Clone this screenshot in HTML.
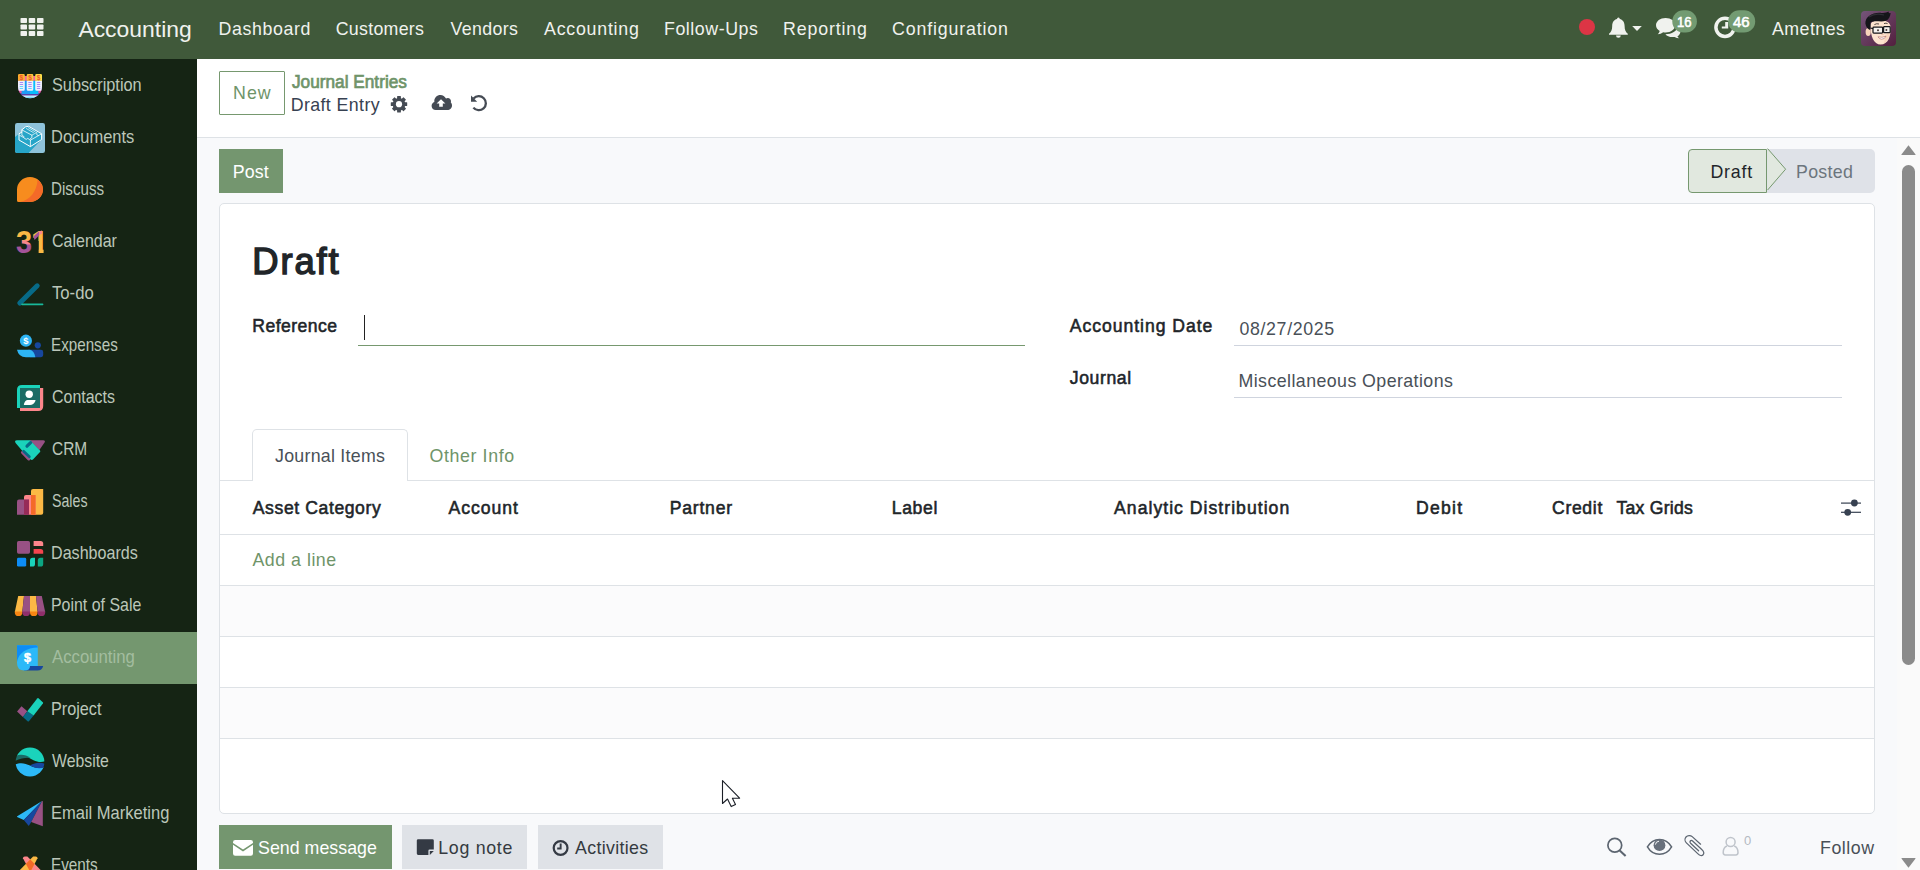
<!DOCTYPE html>
<html lang="en">
<head>
<meta charset="utf-8">
<title>Odoo - Draft Entry</title>
<style>
*{box-sizing:border-box;margin:0;padding:0}
html,body{width:1920px;height:870px;overflow:hidden;background:#f8f9fb;font-family:"Liberation Sans",sans-serif;font-size:18px;color:#374151}
.abs{position:absolute}
.t{position:absolute;white-space:nowrap;display:block}
svg{position:absolute;overflow:visible}
#nav{position:absolute;left:0;top:0;width:1920px;height:59px;background:#40593a}
#side{position:absolute;left:0;top:59px;width:197px;height:811px;background:#152414}
#side .active{position:absolute;left:0;top:573px;width:197px;height:52px;background:#74976f}
#cp{position:absolute;left:197px;top:59px;width:1723px;height:79px;background:#fff;border-bottom:1px solid #dee2e6}
#main{position:absolute;left:197px;top:138px;width:1700px;height:732px;background:#f8f9fb}
#sheet{position:absolute;left:219px;top:203px;width:1656px;height:611px;background:#fff;border:1px solid #dee2e6;border-radius:5px}
.btn-new{position:absolute;left:219px;top:71px;width:66px;height:44px;border:1px solid #76986f;background:#fff;border-radius:1px}
.btn-post{position:absolute;left:219px;top:149px;width:64px;height:44px;background:#74966f}
.hl{position:absolute;height:1px;background:#dee2e6}
.badge{position:absolute;height:22px;border-radius:11px;background:#6f9469;color:#fff}
</style>
</head>
<body>
<!-- ================= MAIN AREA ================= -->
<main id="main"></main>
<header id="cp">
</header>
<div class="btn-new"></div>
<div class="btn-post"></div>
<!-- statusbar -->
<div class="abs" style="left:1767px;top:149px;width:108px;height:44px;background:#dfe2e8;border-radius:0 5px 5px 0"></div>
<svg style="left:1766px;top:148px" width="24" height="46" viewBox="0 0 24 46"><path d="M1.6 .6 L19.6 21.2 L1.6 42 Z" fill="#e1e8df"/><path d="M1.6 .6 L19.6 21.2 L1.6 42" fill="none" stroke="#76986f" stroke-width="1"/></svg>
<div class="abs" style="left:1688px;top:149px;width:79px;height:44px;background:#e1e8df;border:1px solid #76986f;border-radius:4px 0 0 4px"></div>

<span class="t" style="left:233.00px;top:81.63px;font-size:17.8px;line-height:23px;font-weight:400;color:#6f9469;letter-spacing:1.035px;">New</span>
<span class="t" style="left:291.60px;top:70.70px;font-size:17.6px;line-height:23px;font-weight:400;color:#6f9469;transform:scaleX(0.9791);transform-origin:0 0;-webkit-text-stroke:0.7px #6f9469;">Journal Entries</span>
<span class="t" style="left:290.70px;top:93.63px;font-size:17.8px;line-height:23px;font-weight:400;color:#374151;letter-spacing:0.392px;">Draft Entry</span>
<span class="t" style="left:232.80px;top:160.63px;font-size:17.8px;line-height:23px;font-weight:400;color:#ffffff;letter-spacing:0.087px;">Post</span>
<span class="t" style="left:1710.40px;top:160.63px;font-size:17.8px;line-height:23px;font-weight:400;color:#212529;letter-spacing:0.827px;">Draft</span>
<span class="t" style="left:1796.00px;top:160.63px;font-size:17.8px;line-height:23px;font-weight:400;color:#6c757d;letter-spacing:0.306px;">Posted</span>

<!-- sheet -->
<section id="sheet"></section>
<!-- zebra rows -->
<div class="abs" style="left:220px;top:586px;width:1654px;height:50px;background:#fbfbfc"></div>
<div class="abs" style="left:220px;top:688px;width:1654px;height:50px;background:#fbfbfc"></div>
<div class="hl" style="left:220px;top:534px;width:1654px"></div>
<div class="hl" style="left:220px;top:585px;width:1654px"></div>
<div class="hl" style="left:220px;top:636px;width:1654px"></div>
<div class="hl" style="left:220px;top:687px;width:1654px"></div>
<div class="hl" style="left:220px;top:738px;width:1654px"></div>
<!-- tabs -->
<div class="hl" style="left:220px;top:480px;width:1654px"></div>
<div class="abs" style="left:252px;top:429px;width:156px;height:52px;background:#fff;border:1px solid #dee2e6;border-bottom:none;border-radius:5px 5px 0 0"></div>
<!-- field underlines -->
<div class="hl" style="left:358px;top:345px;width:667px;background:#76986f"></div>
<div class="abs" style="left:364px;top:315px;width:1px;height:25px;background:#222"></div>
<div class="hl" style="left:1234px;top:345px;width:608px;background:#cfd4de"></div>
<div class="hl" style="left:1234px;top:397px;width:608px;background:#cfd4de"></div>
<span class="t" style="left:252.20px;top:238.19px;font-size:36.4px;line-height:47px;font-weight:400;color:#212529;letter-spacing:1.913px;-webkit-text-stroke:1.4px #212529;">Draft</span>
<span class="t" style="left:252.30px;top:314.70px;font-size:17.6px;line-height:23px;font-weight:400;color:#212529;letter-spacing:0.439px;-webkit-text-stroke:0.55px #212529;">Reference</span>
<span class="t" style="left:1069.80px;top:314.70px;font-size:17.6px;line-height:23px;font-weight:400;color:#212529;letter-spacing:0.956px;-webkit-text-stroke:0.55px #212529;">Accounting Date</span>
<span class="t" style="left:1239.50px;top:317.63px;font-size:17.8px;line-height:23px;font-weight:400;color:#495057;letter-spacing:0.627px;">08/27/2025</span>
<span class="t" style="left:1069.80px;top:366.70px;font-size:17.6px;line-height:23px;font-weight:400;color:#212529;letter-spacing:0.601px;-webkit-text-stroke:0.55px #212529;">Journal</span>
<span class="t" style="left:1238.50px;top:369.63px;font-size:17.8px;line-height:23px;font-weight:400;color:#495057;letter-spacing:0.426px;">Miscellaneous Operations</span>
<span class="t" style="left:275.00px;top:444.63px;font-size:17.8px;line-height:23px;font-weight:400;color:#495057;letter-spacing:0.263px;">Journal Items</span>
<span class="t" style="left:429.50px;top:444.63px;font-size:17.8px;line-height:23px;font-weight:400;color:#6f9469;letter-spacing:0.619px;">Other Info</span>
<span class="t" style="left:252.80px;top:496.70px;font-size:17.6px;line-height:23px;font-weight:400;color:#212529;letter-spacing:0.590px;-webkit-text-stroke:0.55px #212529;">Asset Category</span>
<span class="t" style="left:448.55px;top:496.70px;font-size:17.6px;line-height:23px;font-weight:400;color:#212529;letter-spacing:0.953px;-webkit-text-stroke:0.55px #212529;">Account</span>
<span class="t" style="left:669.80px;top:496.70px;font-size:17.6px;line-height:23px;font-weight:400;color:#212529;letter-spacing:0.761px;-webkit-text-stroke:0.55px #212529;">Partner</span>
<span class="t" style="left:891.80px;top:496.70px;font-size:17.6px;line-height:23px;font-weight:400;color:#212529;letter-spacing:0.628px;-webkit-text-stroke:0.55px #212529;">Label</span>
<span class="t" style="left:1114.05px;top:496.70px;font-size:17.6px;line-height:23px;font-weight:400;color:#212529;letter-spacing:1.034px;-webkit-text-stroke:0.55px #212529;">Analytic Distribution</span>
<span class="t" style="left:1416.05px;top:496.70px;font-size:17.6px;line-height:23px;font-weight:400;color:#212529;letter-spacing:1.241px;-webkit-text-stroke:0.55px #212529;">Debit</span>
<span class="t" style="left:1552.00px;top:496.70px;font-size:17.6px;line-height:23px;font-weight:400;color:#212529;letter-spacing:0.671px;-webkit-text-stroke:0.55px #212529;">Credit</span>
<span class="t" style="left:1616.55px;top:496.70px;font-size:17.6px;line-height:23px;font-weight:400;color:#212529;letter-spacing:0.243px;-webkit-text-stroke:0.55px #212529;">Tax Grids</span>
<span class="t" style="left:252.50px;top:548.63px;font-size:17.8px;line-height:23px;font-weight:400;color:#6f9469;letter-spacing:0.506px;">Add a line</span>
<!-- column settings icon -->
<svg style="left:1841px;top:498px" width="20" height="20" viewBox="0 0 20 20"><g fill="#374151"><rect x="0" y="4.5" width="20" height="1.2"/><rect x="0" y="13.7" width="20" height="1.2"/><circle cx="13.4" cy="5" r="3.4"/><circle cx="6.7" cy="14.3" r="3.4"/></g></svg>

<!-- chatter buttons -->
<div class="abs" style="left:219px;top:825px;width:173px;height:44px;background:#74966f"></div>
<div class="abs" style="left:402px;top:825px;width:125px;height:44px;background:#dfe2e7"></div>
<div class="abs" style="left:538px;top:825px;width:125px;height:44px;background:#dfe2e7"></div>
<span class="t" style="left:258.00px;top:836.63px;font-size:17.8px;line-height:23px;font-weight:400;color:#ffffff;letter-spacing:0.025px;">Send message</span>
<span class="t" style="left:438.25px;top:836.63px;font-size:17.8px;line-height:23px;font-weight:400;color:#343a40;letter-spacing:0.703px;">Log note</span>
<span class="t" style="left:575.00px;top:836.63px;font-size:17.8px;line-height:23px;font-weight:400;color:#343a40;letter-spacing:0.332px;">Activities</span>
<span class="t" style="left:1820.00px;top:836.63px;font-size:17.8px;line-height:23px;font-weight:400;color:#495057;letter-spacing:0.552px;">Follow</span>

<svg style="left:380px;top:88px" width="120" height="32" viewBox="380 88 120 32">
<!-- gear -->
<g transform="translate(399,104.2)" fill="#454b54">
<g id="tooth"><rect x="-1.9" y="-8.2" width="3.8" height="16.4" rx=".5"/></g>
<use href="#tooth" transform="rotate(45)"/><use href="#tooth" transform="rotate(90)"/><use href="#tooth" transform="rotate(135)"/>
<circle r="6.3"/><circle r="3.1" fill="#fff"/>
</g>
<!-- cloud upload -->
<path d="M435.8 110 C433.4 110 431.6 108.2 431.6 105.9 C431.6 104.1 432.8 102.6 434.4 102 C434.3 101.7 434.3 101.4 434.3 101.1 C434.3 97.7 437 95 440.4 95 C442.9 95 445 96.5 446 98.6 C446.5 98.3 447.1 98.1 447.8 98.1 C449.6 98.1 451 99.5 451 101.3 C451 101.7 450.9 102.1 450.8 102.5 C451.5 103.2 452 104.2 452 105.4 C452 107.9 450 110 447.4 110Z" fill="#454b54"/>
<path d="M441 99.2 L445.4 103.4 H442.8 V106.8 H439.2 V103.4 H436.6Z" fill="#fff"/>
<!-- undo -->
<path d="M473.6 98.6 A7 7 0 1 1 473.4 107.6" fill="none" stroke="#454b54" stroke-width="2.3"/>
<path d="M471 95.6 V101.8 H477.2Z" fill="#454b54"/>
</svg>
<svg style="left:200px;top:826px" width="1700" height="44" viewBox="200 826 1700 44">
<!-- envelope -->
<path d="M233 842.2 Q233 840 235.2 840 H250.8 Q253 840 253 842.2 V843 L243 849.6 L233 843Z M233 844.8 L243 851.4 L253 844.8 V853.6 Q253 855.8 250.8 855.8 H235.2 Q233 855.8 233 853.6Z" fill="#fff"/>
<!-- sticky note -->
<path d="M418.2 839.2 H432.4 Q433.8 839.2 433.8 840.6 V849.6 H429.6 Q428.4 849.6 428.4 850.8 V855 H418.2 Q416.8 855 416.8 853.6 V840.6 Q416.8 839.2 418.2 839.2Z M429.8 855 V851 H433.8Z" fill="#343a44"/>
<!-- clock-o -->
<circle cx="560.6" cy="848" r="6.9" fill="none" stroke="#343a44" stroke-width="2.2"/>
<path d="M559.7 843.6 H561.6 V849.4 H557.2 V847.6 H559.7Z" fill="#343a44"/>
<!-- search -->
<circle cx="1614.8" cy="845.3" r="6.9" fill="none" stroke="#5c6570" stroke-width="1.7"/>
<path d="M1619.7 850.4 L1625.6 856" stroke="#5c6570" stroke-width="2.1"/>
<!-- eye -->
<path d="M1647.4 846.8 C1650.5 841.6 1655 839.4 1659.5 839.4 C1664 839.4 1668.5 841.6 1671.6 846.8 C1668.5 852 1664 854.2 1659.5 854.2 C1655 854.2 1650.5 852 1647.4 846.8Z" fill="none" stroke="#5c6570" stroke-width="1.5"/>
<circle cx="1659.5" cy="845.2" r="5.9" fill="#68707c"/>
<path d="M1655.4 844.6 A3.9 3.9 0 0 1 1659 841.2" stroke="#f8f9fb" stroke-width="1" fill="none"/>
<!-- paperclip -->
<path d="M1700.6 844.2 L1692.2 836.6 C1690.4 835 1687.6 835.2 1686 837 C1684.5 838.8 1684.8 841.4 1686.4 842.9 L1698 853.9 C1699.8 855.6 1701.8 856.2 1703.1 854.8 C1704.4 853.4 1703.8 851.4 1702 849.8 L1692.6 841 C1691.8 840.3 1690.9 840.3 1690.3 841 C1689.7 841.7 1689.9 842.6 1690.6 843.3 L1698.6 850.8" fill="none" stroke="#5c6570" stroke-width="1.25" stroke-linecap="round"/>
<!-- user-o -->
<g fill="none" stroke="#bfc4cb" stroke-width="1.5">
<circle cx="1730.6" cy="842" r="4.5"/>
<path d="M1727 846 C1724.4 847 1723.2 849.4 1723.2 852.6 C1723.2 854.2 1724 855 1725.4 855 H1735.8 C1737.2 855 1738 854.2 1738 852.6 C1738 849.4 1736.8 847 1734.2 846"/>
</g>
</svg>
<span class="t" style="left:1744px;top:832.6px;font-size:13px;line-height:15px;color:#b4bac2">0</span>
<!-- mouse cursor -->
<svg style="left:715px;top:775px" width="32" height="36" viewBox="715 775 32 36"><path d="M722.5 780.6 L722.5 803.5 L727.5 799 L731.2 806.6 L735.5 804.6 L732.4 798.2 L739.6 798.2 Z" fill="#fff" stroke="#1b1f27" stroke-width="1.1" stroke-linejoin="round"/></svg>

<!-- scrollbar -->
<div class="abs" style="left:1897px;top:138px;width:23px;height:732px;background:#fafafa"></div>
<div class="abs" style="left:1902px;top:165px;width:13px;height:500px;background:#8b8b8b;border-radius:7px"></div>
<svg style="left:1901px;top:144px" width="15" height="12" viewBox="0 0 15 12"><path d="M7.5 1.2 L14.6 10.5 Q14.6 11 14 11 L1 11 Q.4 11 .4 10.5Z" fill="#8b8b8b"/></svg>
<svg style="left:1901px;top:857px" width="15" height="12" viewBox="0 0 15 12"><path d="M7.5 10.8 L14.6 1.5 Q14.6 1 14 1 L1 1 Q.4 1 .4 1.5Z" fill="#8b8b8b"/></svg>

<!-- ================= SIDEBAR ================= -->
<aside id="side"><div class="active"></div></aside>
<svg style="left:0;top:0" width="197" height="870" viewBox="0 0 197 870">
<defs>
<clipPath id="cshield"><path d="M0 0H24V12.6C24 19.6 18.6 24.2 12 24.2C5.4 24.2 0 19.6 0 12.6Z"/></clipPath>
<clipPath id="c1"><path d="M31 228 H43.6 V255 H38.6 V241 H31Z"/></clipPath>
<clipPath id="cdoc"><rect width="30" height="30" rx="2.2"/></clipPath>
<clipPath id="cweb"><circle cx="30" cy="762" r="14.4"/></clipPath>
<linearGradient id="g3" x1="0" y1="0" x2="0" y2="1"><stop offset="0" stop-color="#fbb945"/><stop offset=".44" stop-color="#fbb945"/><stop offset=".46" stop-color="#f7868c"/><stop offset=".56" stop-color="#f7868c"/><stop offset=".58" stop-color="#a4539a"/><stop offset="1" stop-color="#a4539a"/></linearGradient>
<linearGradient id="gsub" x1="0" y1="0" x2="1" y2="0"><stop offset="0" stop-color="#fba92c"/><stop offset="1" stop-color="#fde24a"/></linearGradient>
</defs>
<!-- Subscription -->
<g transform="translate(18,74)">
<g clip-path="url(#cshield)">
<rect y="6" width="24" height="18.4" fill="#5a3fa6"/>
<rect y="15.6" width="24" height="3.6" fill="#e8559b"/>
<rect x="3.6" y="6.6" width="8.4" height="13.4" fill="#1e9bf5"/>
<rect x="12" y="6.6" width="8.4" height="13.4" fill="#08bdfc"/>
<rect y="21.5" width="24" height="3" fill="#e4f6ff"/>
<ellipse cx="12" cy="23.6" rx="6.5" ry="1.1" fill="#7fdcfa"/>
<path d="M0 6.6 H6.8 V15.3 Q6.8 16.8 5.3 16.8 H0Z M8.7 6.6 H15.3 V15.3 Q15.3 16.8 13.8 16.8 H10.2 Q8.7 16.8 8.7 15.3Z M17.2 6.6 H24 V16.8 H18.7 Q17.2 16.8 17.2 15.3Z" fill="#eef0fc"/>
</g>
<rect x="6" y="2" width="12" height="4.6" fill="#f0679e"/>
<path d="M0 1.2 Q0 0 1.2 0 H5.6 Q6.8 0 6.8 1.2 V6.7 H0Z M8.7 1.2 Q8.7 0 9.9 0 H14.1 Q15.3 0 15.3 1.2 V6.7 H8.7Z M17.2 1.2 Q17.2 0 18.4 0 H22.8 Q24 0 24 1.2 V6.7 H17.2Z" fill="url(#gsub)"/>
<g font-family="Liberation Sans, sans-serif" font-size="6.6" font-weight="700" fill="#f0562f" text-anchor="middle"><text x="3.4" y="5.9">$</text><text x="12" y="5.9">$</text><text x="20.6" y="5.9">$</text></g>
<g fill="#a98bf5"><rect x="1.6" y="8" width="3.6" height="1.1" rx=".5"/><rect x="1.6" y="10" width="3.6" height="1.1" rx=".5"/><rect x="10.2" y="8" width="3.6" height="1.1" rx=".5"/><rect x="10.2" y="10" width="3.6" height="1.1" rx=".5"/><rect x="10.2" y="12" width="3.6" height="1.1" rx=".5"/><rect x="18.8" y="8" width="3.6" height="1.1" rx=".5"/><rect x="18.8" y="10" width="3.6" height="1.1" rx=".5"/><rect x="18.8" y="12" width="3.6" height="1.1" rx=".5"/><rect x="18.8" y="14" width="3.6" height="1.1" rx=".5"/></g>
<g fill="#63d3f7"><rect x="1.6" y="12" width="3.6" height="1.1" rx=".5"/><rect x="1.6" y="14" width="3.6" height="1.1" rx=".5"/><rect x="10.2" y="14" width="3.6" height="1.1" rx=".5"/></g>
</g>
<!-- Documents -->
<g transform="translate(15,123)" clip-path="url(#cdoc)">
<rect width="30" height="30" fill="#8ec3da"/>
<path d="M0 14 L4 10.8 L15.4 17.4 L26.6 16.5 L14 29.4 L14 30 L0 30Z" fill="#26a5c8"/>
<path d="M4 10.8 L6.9 9.2 L6.9 6.8 L10.7 3.8 L13.6 3.3 L26.6 10.8 V16.5 L15.4 23.6 L4 17Z" fill="#26a5c8" stroke="#fff" stroke-width="1" stroke-linejoin="round"/>
<g fill="none" stroke="#fff" stroke-width=".8" stroke-linejoin="round" stroke-linecap="round">
<path d="M15.4 17.2 V23.4"/>
<path d="M15.4 17.2 L26.4 10.9"/>
<path d="M4.8 12.4 L8 14.2 L11.2 16.4 L12.8 15.4 L15.4 17.2"/>
<path d="M6.9 9.2 V12.4 L9 13.6"/>
<path d="M6.9 6.9 L16.9 12.2 V14.6 L15.4 15.6"/>
<path d="M11.4 5.6 L18.4 9.6 M13.2 4.6 L20.2 8.8" stroke-width=".7"/>
<path d="M16.9 12.2 L21.8 9.4 V11.8 L23.4 12.6" stroke-width=".7"/>
</g>
</g>
<!-- Discuss -->
<g transform="translate(17,177)">
<path d="M13 0 A13 12.5 0 0 1 13 25 L1.6 25 Q0 25 0 23.4 L0 12.5 A13 12.5 0 0 1 13 0Z" fill="#f78c1e"/>
<path d="M20.6 2.4 A13 12.5 0 0 1 13 25 L3 25 C13 23 20 14 20.6 2.4Z" fill="#f46a28"/>
</g>
<!-- Calendar 31 -->
<g font-family="Liberation Sans, sans-serif" font-weight="700" font-size="31.5">
<text transform="translate(16,253) scale(.92,1)" fill="url(#g3)">3</text>
<g clip-path="url(#c1)"><text transform="translate(30.9,253)" fill="#fbb945">1</text></g>
</g>
<path d="M33.4 236.6 L39 231.2 L39.4 235 L34.6 240Z" fill="#a4539a"/>
<path d="M38.8 231.4 L42 230.6 L42.4 233.4 L39.4 235Z" fill="#f7868c"/>
<!-- To-do -->
<path d="M19.8 303 L37.2 285.8" stroke="#076a87" stroke-width="5" stroke-linecap="round" fill="none"/>
<path d="M22 304.4 H42.6" stroke="#18b89a" stroke-width="1.6" stroke-linecap="round" fill="none"/>
<!-- Expenses -->
<circle cx="25.9" cy="340.7" r="6.1" fill="#2db5f5"/>
<text x="25.9" y="344.1" font-family="Liberation Sans, sans-serif" font-weight="700" font-size="9.4" fill="#fff" text-anchor="middle">$</text>
<circle cx="37.8" cy="345.3" r="3.1" fill="#17479e"/>
<path d="M28 349.8 H41 Q43.2 349.8 43.2 352 V354.6 Q43.2 357.2 40.6 357.2 H30Z" fill="#17479e"/>
<path d="M17 349.8 H30 Q34 350.6 35.4 357.2 H26 Q18.5 357.2 17 349.8Z" fill="#2db5f5"/>
<!-- Contacts -->
<path d="M23 388 H43.2 V406 Q43.2 411 38.2 411 H20 V388Z" fill="#fc868b"/>
<path d="M22 385 H40 V408 H17 V390 Q17 385 22 385Z" fill="#1ad3bb"/>
<rect x="20" y="388" width="20" height="20" fill="#1b6b65"/>
<circle cx="29.2" cy="394.2" r="3.7" fill="#fff"/>
<path d="M27.6 400 H35 Q36 400 35.4 401 Q33.6 405 30 405 H24.4 Q23.4 405 24 404 Q25.2 400 27.6 400Z" fill="#fff"/>
<!-- CRM -->
<path d="M29.6 440.2 H43.2 Q45.8 440.3 44.5 442.6 L39.4 450 Z" fill="#985184"/>
<path d="M22.6 452.4 L28.8 458.8" stroke="#985184" stroke-width="3.3" stroke-linecap="round"/>
<path d="M17 440.2 H30 L40 450.4 Q40.7 451.3 40 452.1 L33.2 459.2 Q31.8 460.5 30.5 459.3 L29.2 457.8 L22 450.4 L15.6 443 Q14 440.3 17 440.2Z" fill="#1ad3bb"/>
<path d="M27 446.2 L30.6 442.6" stroke="#076a87" stroke-width="3.2" stroke-linecap="round"/>
<path d="M23.6 451.2 L29.4 456.8" stroke="#076a87" stroke-width="2.6" stroke-linecap="round"/>
<!-- Sales -->
<path d="M33 489 H43.2 V512.8 Q43.2 514.8 41.2 514.8 H31 V491 Q31 489 33 489Z" fill="#fbb945"/>
<path d="M26 495 H35.6 V514.8 H24 V497 Q24 495 26 495Z" fill="#fc868b"/>
<path d="M19 499.6 H29 V514.8 H17 V501.6 Q17 499.6 19 499.6Z" fill="#985184"/>
<rect x="24" y="499.6" width="5" height="15.2" fill="#962b58"/>
<rect x="31" y="495" width="4.6" height="19.8" fill="#f46a28"/>
<!-- Dashboards -->
<rect x="17" y="541" width="13" height="12.7" rx="1.6" fill="#985184"/>
<path d="M33.6 541 H40.6 Q43.2 541 43.2 543.6 V546 H33.6Z" fill="#fc868b"/>
<path d="M33.6 549 H40.6 Q43.2 549 43.2 551.6 V553.8 H33.6Z" fill="#f5454f"/>
<rect x="17" y="557.8" width="9.2" height="8.8" rx="1.4" fill="#0d8df6"/>
<path d="M32.6 557.8 H35 V564 Q35 566.6 32.4 566.6 H30 V560.4 Q30 557.8 32.6 557.8Z" fill="#1ad3bb"/>
<path d="M40.4 557.8 H43.2 V564 Q43.2 566.6 40.6 566.6 H37.8 V560.4 Q37.8 557.8 40.4 557.8Z" fill="#0ca683"/>
<!-- Point of Sale -->
<g>
<path d="M18.2 596 H24 L22.3 612 H14.8Z" fill="#fbb945"/><path d="M24 596 H30 V612 H22.3Z" fill="#985184"/><path d="M30 596 H36 L37.6 612 H30Z" fill="#fbb945"/><path d="M36 596 H41.8 L45.2 612 H37.6Z" fill="#985184"/>
<path d="M14.8 611.4 H22.3 V612.4 A3.75 3.7 0 0 1 14.8 612.4Z" fill="#f78613"/><path d="M22.3 611.4 H30 V612.4 A3.85 3.7 0 0 1 22.3 612.4Z" fill="#8f2f6b"/><path d="M30 611.4 H37.6 V612.4 A3.8 3.7 0 0 1 30 612.4Z" fill="#f78613"/><path d="M37.6 611.4 H45.2 V612.4 A3.8 3.7 0 0 1 37.6 612.4Z" fill="#8f2f6b"/>
</g>
<!-- Accounting -->
<path d="M24.5 666 H43.2 Q42 670.6 37.4 670.6 H24Z" fill="#17479e"/>
<path d="M17 645.3 H35.8 Q37.8 645.3 37.8 647.3 V666 H30 Q30 670.6 24.4 670.6 Q17 670.6 17 663Z" fill="#2cb9f8"/>
<path d="M17 645.3 H35.8 Q37.8 645.3 37.8 647.3 V647.6 C27 647.6 18.4 653 17 662Z" fill="#0d8df6"/>
<text x="27.6" y="662.4" font-family="Liberation Sans, sans-serif" font-weight="700" font-size="12.6" fill="#fff" stroke="#fff" stroke-width=".5" text-anchor="middle">$</text>
<!-- Project -->
<path d="M17.05 711.5 L21.5 706.2 L27.3 711.2 L22.9 716.9Z" fill="#985184"/>
<path d="M27.3 711.2 L33.6 715.6 L28.9 721.3 Q28.3 721.9 27.6 721.3 L22.9 716.9Z" fill="#076a87"/>
<path d="M27.3 711.2 L37.2 698.4 Q37.8 697.7 38.5 698.3 L42.8 702.2 Q43.4 702.8 42.9 703.5 L33.6 715.6Z" fill="#1ad3bb"/>
<!-- Website -->
<g clip-path="url(#cweb)">
<path d="M14 746 H46 V761 C42 762.4 38 762.4 33.5 760.2 C27 756.6 22 753.6 14 757Z" fill="#1ad3bb"/>
<path d="M14 756.6 C21 753.6 25 754.6 30.5 757.8 C25 757.4 20 758.6 14 761.4Z" fill="#1b6b65"/>
<path d="M14 765 C20 762 25 763 30 765.6 C35 768.4 40 769 46 766 V780 H14Z" fill="#2cb9f8"/>
<path d="M30 765.6 C35 762.6 40 762 46 764 V766.4 C41 769.4 36 768.8 30 765.6Z" fill="#17479e"/>
</g>
<!-- Email Marketing -->
<path d="M17.1 817.1 Q16.6 816.4 17.6 815.9 L42.1 801 L23.8 820.1Z" fill="#2cb9f8"/>
<path d="M23.8 820.1 L42.1 801 L31.2 822 L28.8 826Z" fill="#17479e"/>
<path d="M42.1 801 Q42.8 800.6 42.8 801.6 L42.8 826.3 L31.2 822Z" fill="#985184"/>
<!-- Events -->
<clipPath id="cev"><path d="M23 858.2 Q22.8 856.4 24.8 856.4 L27.4 856.6 L42.6 872 L30.2 872Z"/></clipPath>
<path d="M23 858.2 Q22.8 856.4 24.8 856.4 L27.4 856.6 L42.6 872 L30.2 872Z" fill="#fc868b"/>
<path d="M37.5 858.2 Q37.7 856.4 35.7 856.4 L33.1 856.6 L17.9 872 L30.3 872Z" fill="#fbb945"/>
<path d="M37.5 858.2 Q37.7 856.4 35.7 856.4 L33.1 856.6 L17.9 872 L30.3 872Z" fill="#f46a28" clip-path="url(#cev)"/>
</svg>

<span class="t" style="left:52.00px;top:72.63px;font-size:17.8px;line-height:23px;font-weight:400;color:#bcc7ba;transform:translateY(.9px) scaleX(0.9158);transform-origin:0 0;">Subscription</span>
<span class="t" style="left:51.07px;top:124.63px;font-size:17.8px;line-height:23px;font-weight:400;color:#bcc7ba;transform:translateY(.9px) scaleX(0.9265);transform-origin:0 0;">Documents</span>
<span class="t" style="left:51.15px;top:176.63px;font-size:17.8px;line-height:23px;font-weight:400;color:#bcc7ba;transform:translateY(.9px) scaleX(0.8525);transform-origin:0 0;">Discuss</span>
<span class="t" style="left:52.00px;top:228.63px;font-size:17.8px;line-height:23px;font-weight:400;color:#bcc7ba;transform:translateY(.9px) scaleX(0.8998);transform-origin:0 0;">Calendar</span>
<span class="t" style="left:52.00px;top:280.63px;font-size:17.8px;line-height:23px;font-weight:400;color:#bcc7ba;transform:translateY(.9px) scaleX(0.9374);transform-origin:0 0;">To-do</span>
<span class="t" style="left:51.15px;top:332.63px;font-size:17.8px;line-height:23px;font-weight:400;color:#bcc7ba;transform:translateY(.9px) scaleX(0.8549);transform-origin:0 0;">Expenses</span>
<span class="t" style="left:52.00px;top:384.63px;font-size:17.8px;line-height:23px;font-weight:400;color:#bcc7ba;transform:translateY(.9px) scaleX(0.8964);transform-origin:0 0;">Contacts</span>
<span class="t" style="left:52.00px;top:436.63px;font-size:17.8px;line-height:23px;font-weight:400;color:#bcc7ba;transform:translateY(.9px) scaleX(0.8694);transform-origin:0 0;">CRM</span>
<span class="t" style="left:52.00px;top:488.63px;font-size:17.8px;line-height:23px;font-weight:400;color:#bcc7ba;transform:translateY(.9px) scaleX(0.7984);transform-origin:0 0;">Sales</span>
<span class="t" style="left:51.09px;top:540.63px;font-size:17.8px;line-height:23px;font-weight:400;color:#bcc7ba;transform:translateY(.9px) scaleX(0.9054);transform-origin:0 0;">Dashboards</span>
<span class="t" style="left:51.10px;top:592.63px;font-size:17.8px;line-height:23px;font-weight:400;color:#bcc7ba;transform:translateY(.9px) scaleX(0.8956);transform-origin:0 0;">Point of Sale</span>
<span class="t" style="left:52.00px;top:644.63px;font-size:17.8px;line-height:23px;font-weight:400;color:#a3bd9f;transform:translateY(.9px) scaleX(0.9416);transform-origin:0 0;">Accounting</span>
<span class="t" style="left:51.09px;top:696.63px;font-size:17.8px;line-height:23px;font-weight:400;color:#bcc7ba;transform:translateY(.9px) scaleX(0.9118);transform-origin:0 0;">Project</span>
<span class="t" style="left:52.00px;top:748.63px;font-size:17.8px;line-height:23px;font-weight:400;color:#bcc7ba;transform:translateY(.9px) scaleX(0.8903);transform-origin:0 0;">Website</span>
<span class="t" style="left:51.07px;top:800.63px;font-size:17.8px;line-height:23px;font-weight:400;color:#bcc7ba;transform:translateY(.9px) scaleX(0.9285);transform-origin:0 0;">Email Marketing</span>
<span class="t" style="left:51.14px;top:852.63px;font-size:17.8px;line-height:23px;font-weight:400;color:#bcc7ba;transform:translateY(.9px) scaleX(0.8603);transform-origin:0 0;">Events</span>

<!-- ================= NAVBAR ================= -->
<nav id="nav"></nav>
<svg style="left:1560px;top:0" width="360" height="59" viewBox="1560 0 360 59">
<defs>
<linearGradient id="gav" x1="0" y1="0" x2="1" y2="1"><stop offset="0" stop-color="#75557a"/><stop offset="1" stop-color="#531f3e"/></linearGradient>
<clipPath id="cav"><rect x="1861" y="11" width="35" height="35" rx="4"/></clipPath>
</defs>
<!-- bell -->
<g fill="#f0f2ee">
<path d="M1618.4 17.4 a1.3 1.3 0 0 1 1.3 1.5 C1623.2 19.6 1624.6 22.6 1624.6 26 C1624.6 30 1625.8 32.2 1627.8 33.8 V34.8 H1609 V33.8 C1611 32.2 1612.2 30 1612.2 26 C1612.2 22.6 1613.6 19.6 1617.1 18.9 a1.3 1.3 0 0 1 1.3 -1.5Z"/>
<path d="M1616 35.4 H1620.8 A2.4 2.4 0 0 1 1616 35.4Z"/>
<path d="M1632.2 26 H1641.8 L1637 31Z"/>
</g>
<!-- comments -->
<g fill="#f0f2ee">
<path d="M1665.6 18 C1671 18 1675.2 21.2 1675.2 25.2 C1675.2 29.2 1671 32.4 1665.6 32.4 C1664.8 32.4 1664 32.3 1663.2 32.2 C1661.6 33.4 1659.8 34 1657.8 34.2 C1658.8 33.2 1659.4 32.2 1659.7 30.9 C1657.4 29.6 1656 27.5 1656 25.2 C1656 21.2 1660.2 18 1665.6 18Z"/>
<path d="M1677.4 27 C1679.2 28.2 1680.4 29.9 1680.4 31.8 C1680.4 33.7 1679.2 35.3 1677.4 36.4 C1677.7 37 1678.4 37.6 1679.4 38.2 C1677.6 38.1 1676 37.7 1674.6 36.9 C1673.9 37 1673.2 37.1 1672.4 37.1 C1669.4 37.1 1666.8 36 1665.4 34.2 C1671.6 34.2 1677.4 31 1677.4 27Z"/>
</g>
<rect x="1672.3" y="10.3" width="24.6" height="22.2" rx="11.1" fill="#739b72"/>
<!-- activity clock -->
<g>
<circle cx="1725" cy="27.3" r="9.1" fill="none" stroke="#f0f2ee" stroke-width="3.5"/>
<path d="M1725.2 22 H1728.2 V28.6 H1721.8 V26.4 H1725.2Z" fill="#f0f2ee"/>
</g>
<rect x="1728.2" y="10.3" width="27" height="22.2" rx="11.1" fill="#739b72"/>
<!-- avatar -->
<g clip-path="url(#cav)">
<rect x="1861" y="11" width="35" height="35" fill="url(#gav)"/>
<g transform="translate(1861,11)">
<ellipse cx="7.2" cy="21" rx="2.6" ry="3.9" fill="#f7d3bb"/>
<path d="M9.4 14 C9.4 8 28.8 6 29.6 16 C30.2 25 27 33.6 19.6 33.6 C12.6 33.6 9.4 25 9.4 14Z" fill="#fde3cf"/>
<path d="M23 26 C26 24 28.6 20 29.4 15.6 C30 22 27.6 30.4 22 33 C24 31 24 28 23 26Z" fill="#f6cdb4" opacity=".7"/>
<path d="M4.4 12.6 C4 5.6 12 1 20.6 2 C24 2.2 26 1.6 27.6 .6 C27.4 2 28.4 2.4 29.6 2 C29.4 5 28 8.4 25 9.8 C20 11.6 14 9 9.6 11.6 C9.6 14.6 9.8 17 9 19 C7.4 18.6 4.8 16.4 4.4 12.6Z" fill="#15151a"/>
<path d="M8 6 C12 3 18 2.6 23 4" stroke="#44444c" stroke-width="1.1" fill="none" opacity=".55"/>
<rect x="12" y="16.1" width="9.6" height="6" rx=".8" fill="#f4f1ee" stroke="#17171b" stroke-width="1.25"/>
<rect x="22.6" y="15.7" width="6.6" height="6" rx=".8" fill="#f4f1ee" stroke="#17171b" stroke-width="1.25"/>
<path d="M21.4 18.2 H22.8 M9.4 17 L12 17.6" stroke="#17171b" stroke-width="1.1"/>
<circle cx="17" cy="19.3" r="1" fill="#4a3a36"/><circle cx="25.4" cy="19" r="1" fill="#4a3a36"/>
<path d="M13.4 13.6 Q15.6 12.2 18 13" stroke="#2a2020" stroke-width=".8" fill="none"/><path d="M23 12.6 Q25 11.8 26.6 12.6" stroke="#2a2020" stroke-width=".8" fill="none"/>
<path d="M17 25.8 Q21 27 25 25.2 Q23.6 28.4 20.6 28.2 Q18.2 28 17 25.8Z" fill="#fff" stroke="#9a4848" stroke-width=".5"/>
<path d="M20.4 23.4 Q21.6 23.9 22.6 23.3" stroke="#e8a58f" stroke-width=".7" fill="none"/>
</g>
</g>
</svg>

<span class="t" style="left:78.40px;top:14.37px;font-size:22.9px;line-height:30px;font-weight:400;color:#f0f2ee;letter-spacing:0.008px;">Accounting</span>
<span class="t" style="left:218.50px;top:17.63px;font-size:17.8px;line-height:23px;font-weight:400;color:#f0f2ee;letter-spacing:0.613px;">Dashboard</span>
<span class="t" style="left:335.75px;top:17.63px;font-size:17.8px;line-height:23px;font-weight:400;color:#f0f2ee;letter-spacing:0.272px;">Customers</span>
<span class="t" style="left:450.50px;top:17.63px;font-size:17.8px;line-height:23px;font-weight:400;color:#f0f2ee;letter-spacing:0.357px;">Vendors</span>
<span class="t" style="left:544.00px;top:17.63px;font-size:17.8px;line-height:23px;font-weight:400;color:#f0f2ee;letter-spacing:0.768px;">Accounting</span>
<span class="t" style="left:664.00px;top:17.63px;font-size:17.8px;line-height:23px;font-weight:400;color:#f0f2ee;letter-spacing:0.552px;">Follow-Ups</span>
<span class="t" style="left:783.00px;top:17.63px;font-size:17.8px;line-height:23px;font-weight:400;color:#f0f2ee;letter-spacing:0.849px;">Reporting</span>
<span class="t" style="left:892.00px;top:17.63px;font-size:17.8px;line-height:23px;font-weight:400;color:#f0f2ee;letter-spacing:0.843px;">Configuration</span>
<span class="t" style="left:1772.00px;top:17.63px;font-size:17.8px;line-height:23px;font-weight:400;color:#f0f2ee;letter-spacing:0.453px;">Ametnes</span>
<span class="t" style="left:1677.04px;top:12.03px;font-size:15.2px;line-height:20px;font-weight:400;color:#ffffff;transform:scaleX(0.8610);transform-origin:0 0;-webkit-text-stroke:0.6px #ffffff;">16</span>
<span class="t" style="left:1733.20px;top:12.03px;font-size:15.2px;line-height:20px;font-weight:400;color:#ffffff;transform:scaleX(0.9850);transform-origin:0 0;-webkit-text-stroke:0.6px #ffffff;">46</span>
<!-- apps grid icon -->
<svg style="left:20px;top:18px" width="24" height="18" viewBox="0 0 24 18"><g fill="#f0f2ee"><rect x=".5" y="0" width="6.5" height="5" rx=".8"/><rect x="8.7" y="0" width="6.5" height="5" rx=".8"/><rect x="17" y="0" width="6.5" height="5" rx=".8"/><rect x=".5" y="6.5" width="6.5" height="5" rx=".8"/><rect x="8.7" y="6.5" width="6.5" height="5" rx=".8"/><rect x="17" y="6.5" width="6.5" height="5" rx=".8"/><rect x=".5" y="13" width="6.5" height="5" rx=".8"/><rect x="8.7" y="13" width="6.5" height="5" rx=".8"/><rect x="17" y="13" width="6.5" height="5" rx=".8"/></g></svg>
<!-- red dot -->
<div class="abs" style="left:1579px;top:19px;width:16px;height:16px;border-radius:50%;background:#dc3545"></div>
</body>
</html>
